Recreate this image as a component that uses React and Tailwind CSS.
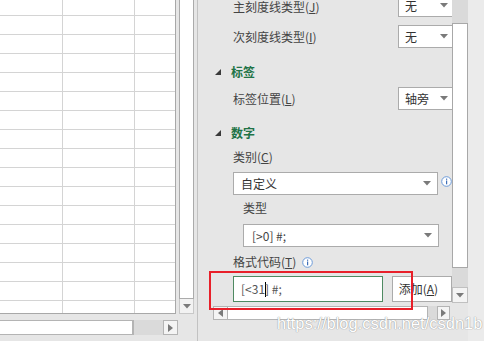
import React from 'react';

const font = { fontFamily: '"Noto Sans CJK SC", "Noto Sans", sans-serif' };

const DownTri = ({ className = '' }) => (
  <svg width="8" height="5" viewBox="0 0 8 5" className={className}>
    <polygon points="0,0 8,0 4,4.5" fill="#7a7a7a" />
  </svg>
);

const RightTri = () => (
  <svg width="5" height="8" viewBox="0 0 5 8">
    <polygon points="0,0 5,4 0,8" fill="#7a7a7a" />
  </svg>
);

const LeftTri = () => (
  <svg width="5" height="8" viewBox="0 0 5 8">
    <polygon points="5,0 0,4 5,8" fill="#7a7a7a" />
  </svg>
);

const Corner = () => (
  <svg width="6" height="6" viewBox="0 0 6 6" className="shrink-0">
    <polygon points="6,0 6,6 0,6" fill="#3a3a3a" />
  </svg>
);

const Info = () => (
  <svg width="11" height="11" viewBox="0 0 11 11" className="shrink-0">
    <circle cx="5.5" cy="5.5" r="4.8" fill="#fff" stroke="#6b9ad8" strokeWidth="1" />
    <rect x="5" y="4.5" width="1.2" height="3.8" fill="#3f6fb8" />
    <rect x="5" y="2.6" width="1.2" height="1.2" fill="#3f6fb8" />
  </svg>
);

const Select = ({ value, className = '' }) => (
  <div className={`h-[23px] bg-white border border-[#ababab] flex items-center justify-between pl-[6px] pr-[6px] text-[12px] text-[#333] ${className}`}>
    <span>{value}</span>
    <DownTri />
  </div>
);

const Header = ({ title, className = '' }) => (
  <div className={`h-[18px] flex items-center pl-[17px] ${className}`}>
    <Corner />
    <span className="ml-[10px] text-[12px] font-bold text-[#217346]">{title}</span>
  </div>
);

const Label = ({ children, className = '' }) => (
  <div className={`h-[18px] flex items-center pl-[35px] text-[12px] text-[#444] ${className}`}>
    {children}
  </div>
);

function Sheet() {
  const rows = [16, ...Array(15).fill(19), 12];
  return (
    <div className="w-[197px] h-full flex flex-col shrink-0">
      <div className="flex h-[314px]">
        <div className="w-[176px] h-[314px] bg-white border-r border-b border-[#a8a8a8] flex flex-col">
          {rows.map((h, i) => (
            <div
              key={i}
              className={`flex shrink-0 ${i < rows.length - 1 ? 'border-b border-[#d4d4d4]' : ''}`}
              style={{ height: h }}
            >
              <div className="w-[63px] border-r border-[#d4d4d4]" />
              <div className="w-[72px] border-r border-[#d4d4d4]" />
              <div className="flex-1" />
            </div>
          ))}
        </div>
        <div className="ml-[3px] w-[15px] flex flex-col">
          <div className="h-[299px] bg-white border-x border-b border-[#ababab]" />
          <div className="h-[15px] bg-[#f2f2f2] border border-t-0 border-[#c8c8c8] flex items-center justify-center">
            <DownTri />
          </div>
        </div>
      </div>
      <div className="mt-[6px] flex h-[15px]">
        <div className="w-[134px] bg-white border-r-2 border-y border-[#b4b4b4]" />
        <div className="w-[29px] bg-[#dadada]" />
        <div className="w-[15px] bg-[#f4f4f4] border border-[#b4b4b4] flex items-center justify-center">
          <RightTri />
        </div>
      </div>
    </div>
  );
}

function Panel() {
  return (
    <div className="flex-1 flex border-l border-[#c2c2c2] h-full">
      <div className="w-[254px] h-full overflow-hidden flex flex-col">
        <div className="-mt-[6px] h-[23px] flex items-center justify-between">
          <Label className="pl-[35px] mt-[3px]">主刻度线类型(<u>J</u>)</Label>
          <Select value="无" className="w-[57px] -mr-[3px]" />
        </div>
        <div className="mt-[8px] h-[23px] flex items-center justify-between">
          <Label>次刻度线类型(<u>I</u>)</Label>
          <Select value="无" className="w-[57px] -mr-[3px]" />
        </div>
        <Header title="标签" className="mt-[15px]" />
        <div className="mt-[6px] h-[23px] flex items-center justify-between">
          <Label>标签位置(<u>L</u>)</Label>
          <Select value="轴旁" className="w-[57px] -mr-[3px]" />
        </div>
        <Header title="数字" className="mt-[14px]" />
        <Label className="mt-[6px]">类别(<u>C</u>)</Label>
        <div className="mt-[6px] flex items-center pl-[35px]">
          <Select value="自定义" className="w-[206px] pl-[7px]" />
          <span className="ml-[3px] mt-[-5px]"><Info /></span>
        </div>
        <Label className="mt-[4px] pl-[45px]">类型</Label>
        <div className="mt-[7px] pl-[45px]">
          <Select value="[>0] #;" className="w-[196px] pl-[8px] text-[#444]" />
        </div>
        <div className="mt-[6px] h-[18px] flex items-center pl-[35px] text-[12px] text-[#444]">
          <span>格式代码(<u>T</u>)</span>
          <span className="ml-[6px]"><Info /></span>
        </div>
        <div className="mt-[5px] flex pl-[35px]">
          <div className="w-[154px] h-[26px] bg-white border border-[#4f8a62] flex items-center pl-[7px] text-[12px] text-[#555]">
            <span>[&lt;31</span>
            <span className="w-px h-[15px] bg-black -mr-px" />
            <span>] #;</span>
          </div>
          <div className="ml-[9px] w-[62px] h-[26px] bg-white border border-[#ababab] flex items-center pl-[6px] text-[12px] text-[#333]">
            添加(<u>A</u>)
          </div>
        </div>
        <div className="mt-[4px] ml-[15px] flex h-[14px] w-[237px]">
          <div className="w-[15px] bg-[#f4f4f4] border border-[#b4b4b4] flex items-center justify-center">
            <LeftTri />
          </div>
          <div className="w-[200px] bg-white border-y border-r border-[#b4b4b4]" />
          <div className="w-[9px] bg-[#dadada]" />
          <div className="w-[13px] bg-[#f4f4f4] border border-[#b4b4b4] flex items-center justify-center">
            <RightTri />
          </div>
        </div>
      </div>
      <div className="w-[16px] flex flex-col shrink-0">
        <div className="h-[23px] bg-[#dadada]" />
        <div className="h-[245px] bg-white border border-[#a8a8a8]" />
        <div className="h-[19px] bg-[#dadada]" />
        <div className="h-[16px] bg-[#f4f4f4] border border-[#c0c0c0] flex items-center justify-center">
          <DownTri />
        </div>
      </div>
      <div className="flex-1 bg-[#ebebeb]" />
    </div>
  );
}

export default function App() {
  return (
    <div className="relative w-[484px] h-[341px] overflow-hidden bg-[#e6e6e6] flex" style={font}>
      <Sheet />
      <Panel />
      <div className="absolute left-[209px] top-[271px] w-[204px] h-[39px] border-2 border-[#e8202a]" />
      <div
        className="absolute left-[277px] top-[311px] text-[16.5px] text-white"
        style={{ fontFamily: '"Liberation Sans", Arial, sans-serif', textShadow: '0 0 1px #9a9a9a, 0 0 1px #9a9a9a' }}
      >
        https://blog.csdn.net/csdn1b
      </div>
    </div>
  );
}
